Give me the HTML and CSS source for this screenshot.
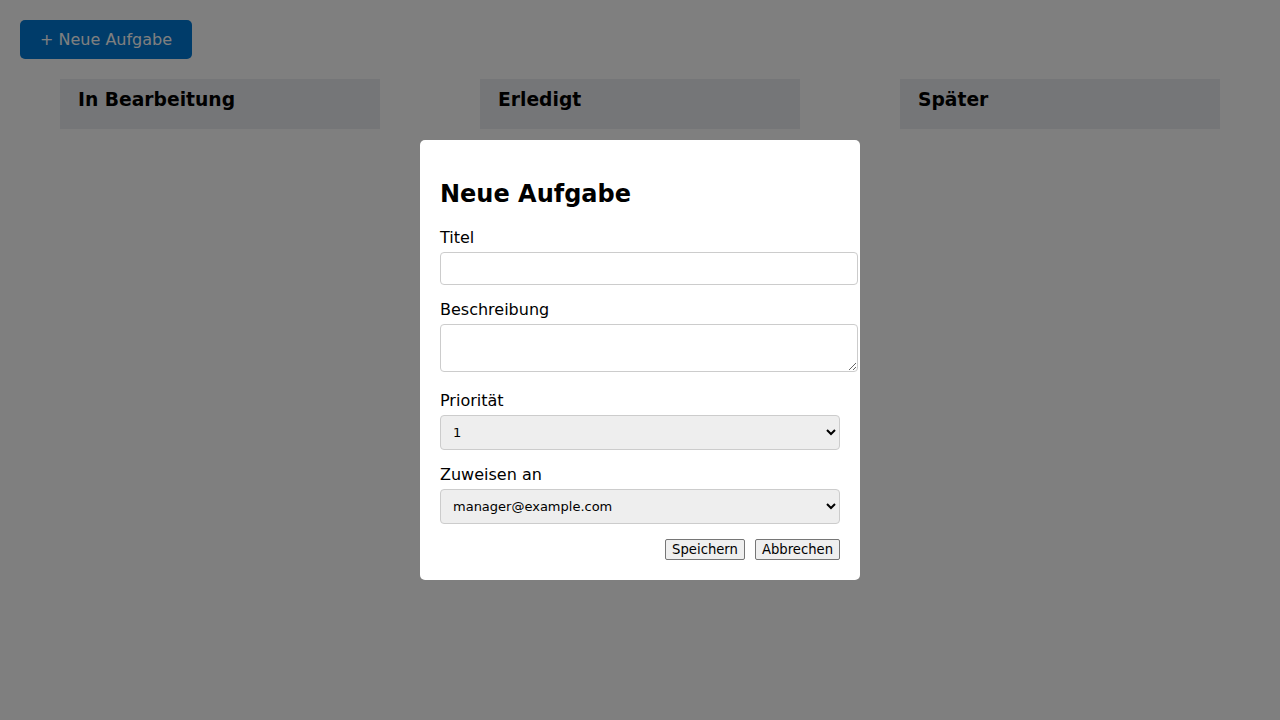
FILE: index.html
```html
<!DOCTYPE html>
<html lang="de">
<head>
<meta charset="utf-8">
<title>Aufgaben</title>
<link rel="stylesheet" href="styles.css">
</head>
<body>
<div class="page">
  <button class="add-btn">+ Neue Aufgabe</button>
  <div class="board">
    <div class="column"><h3>In Bearbeitung</h3></div>
    <div class="column"><h3>Erledigt</h3></div>
    <div class="column"><h3>Später</h3></div>
  </div>
</div>

<div class="overlay">
  <div class="modal">
    <h2>Neue Aufgabe</h2>
    <label class="lbl" for="t">Titel</label>
    <input class="field" id="t" type="text">
    <label class="lbl" for="d">Beschreibung</label>
    <textarea class="field area" id="d"></textarea>
    <label class="lbl" for="p">Priorität</label>
    <select class="sel" id="p">
      <option>1</option><option>2</option><option>3</option>
    </select>
    <label class="lbl" for="a">Zuweisen an</label>
    <select class="sel" id="a">
      <option>manager@example.com</option>
    </select>
    <div class="actions">
      <button class="act">Speichern</button>
      <button class="act">Abbrechen</button>
    </div>
  </div>
</div>
</body>
</html>
```
FILE: styles.css
```css
html, body {
  margin: 0;
  padding: 0;
}
body {
  font-family: "DejaVu Sans", sans-serif;
  font-size: 16px;
  background: #ffffff;
  color: #000;
}
.page {
  padding: 20px;
}
.add-btn {
  display: block;
  font-family: "DejaVu Sans", sans-serif;
  font-size: 16px;
  line-height: 19px;
  padding: 10px 20px;
  background: #0078d4;
  color: #fff;
  border: none;
  border-radius: 5px;
  margin: 0 0 20px 0;
}
.board {
  display: grid;
  grid-template-columns: repeat(3, 320px);
  column-gap: 20px;
  justify-content: space-around;
}
.column {
  background: #ebedf0;
  padding: 10px 18px 18px;
  height: 50px;
  box-sizing: border-box;
}
.column h3 {
  margin: 0;
  font-size: 18.72px;
  line-height: 22px;
  font-weight: bold;
}
.overlay {
  position: fixed;
  inset: 0;
  background: rgba(0, 0, 0, 0.5);
  display: flex;
  align-items: center;
  justify-content: center;
}
.modal {
  background: #fff;
  width: 400px;
  height: 400px;
  padding: 20px;
  border-radius: 5px;
}
.modal h2 {
  margin: 20px 0 20px;
  font-size: 24px;
  line-height: 28px;
  font-weight: bold;
}
.lbl {
  display: block;
  font-size: 16px;
  line-height: 19px;
  margin-bottom: 5px;
}
.field {
  display: block;
  width: 100%;
  box-sizing: content-box;
  padding: 8px;
  border: 1px solid #ccc;
  border-radius: 4px;
  font-family: "DejaVu Sans", sans-serif;
  font-size: 13.33px;
  line-height: 15px;
  height: 15px;
  margin: 0 0 15px 0;
}
.area {
  font-family: "DejaVu Sans Mono", monospace;
  height: 30px;
  margin-bottom: 19px;
  resize: vertical;
}
.sel {
  display: block;
  width: 100%;
  box-sizing: border-box;
  height: 35px;
  padding: 8px;
  border: 1px solid #ccc;
  border-radius: 4px;
  background: #eeeeee;
  font-family: "DejaVu Sans", sans-serif;
  font-size: 13px;
  color: #000;
  margin: 0 0 15px 0;
}
.actions {
  display: flex;
  justify-content: flex-end;
  gap: 10px;
}
.act {
  font-family: "DejaVu Sans", sans-serif;
  font-size: 13.2px;
  height: 21px;
  padding: 1px 6px;
  line-height: 15px;
  background: #efefef;
  border: 1px solid #767676;
  border-radius: 2px;
  color: #000;
}
```
